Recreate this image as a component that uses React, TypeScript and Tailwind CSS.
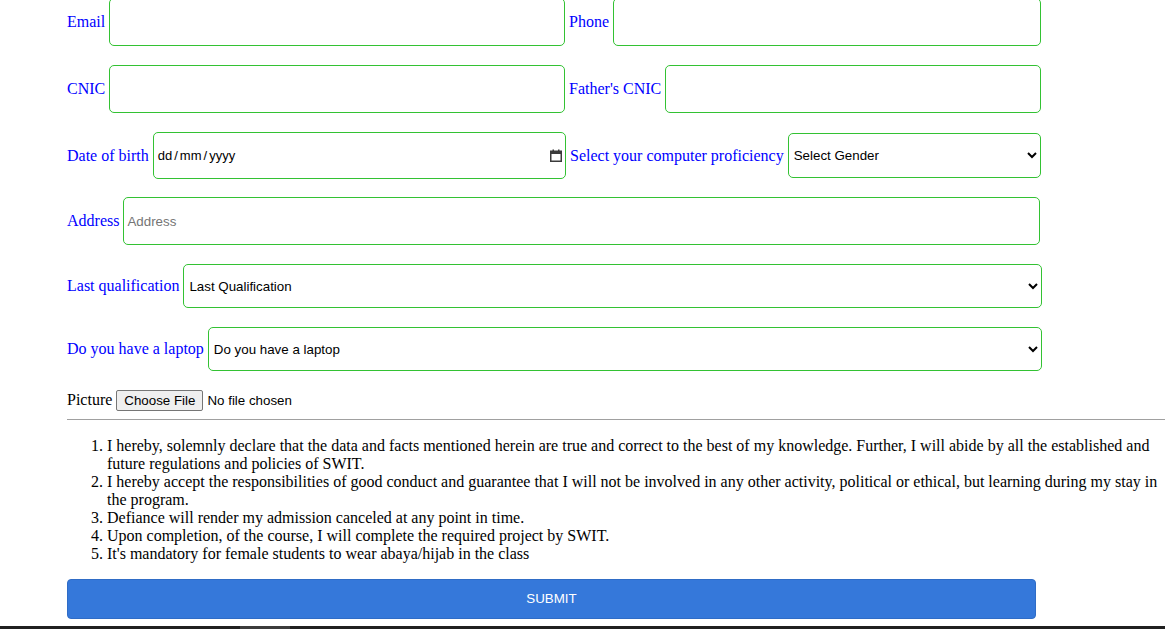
import React from 'react'

const label = "text-[16px] text-[#0000ff] whitespace-nowrap font-['Liberation_Serif',serif]"
const field =
  "border border-[#33c233] rounded-[5px] bg-white px-[3px] text-[13.33px] text-black font-['Liberation_Sans',Arial,sans-serif] outline-none"
const select =
  "border border-[#33c233] rounded-[5px] bg-white pl-[1px] pr-[3px] text-[13.33px] text-black font-['Liberation_Sans',Arial,sans-serif] outline-none"

const terms = [
  'I hereby, solemnly declare that the data and facts mentioned herein are true and correct to the best of my knowledge. Further, I will abide by all the established and future regulations and policies of SWIT.',
  'I hereby accept the responsibilities of good conduct and guarantee that I will not be involved in any other activity, political or ethical, but learning during my stay in the program.',
  'Defiance will render my admission canceled at any point in time.',
  'Upon completion, of the course, I will complete the required project by SWIT.',
  "It's mandatory for female students to wear abaya/hijab in the class",
]

function Field({ name, className }: { name: string; className: string }) {
  return (
    <div className={`flex items-center gap-1 ${className}`}>
      <label className={label}>{name}</label>
      <input type="text" className={`${field} flex-1 min-w-0 h-full`} />
    </div>
  )
}

function CalendarIcon() {
  return (
    <svg width="12" height="13" viewBox="0 0 12 13" className="shrink-0">
      <rect x="0.75" y="2.25" width="10.5" height="10" fill="none" stroke="#3b3b3b" strokeWidth="1.5" />
      <rect x="0" y="2" width="12" height="3" fill="#3b3b3b" />
      <rect x="2.5" y="0.5" width="1.5" height="2" fill="#3b3b3b" />
      <rect x="8" y="0.5" width="1.5" height="2" fill="#3b3b3b" />
    </svg>
  )
}

function App() {
  return (
    <div className="min-h-screen bg-white overflow-hidden">
      <form className="pl-[67px] flex flex-col" onSubmit={(e) => e.preventDefault()}>
        <div className="flex gap-1 mt-[-2px] h-[48px]">
          <Field name="Email" className="w-[498px]" />
          <Field name="Phone" className="w-[472px]" />
        </div>

        <div className="flex gap-1 mt-[19px] h-[48px]">
          <Field name="CNIC" className="w-[498px]" />
          <Field name="Father's CNIC" className="w-[472px]" />
        </div>

        <div className="flex gap-1 mt-[19px] h-[47px] items-center">
          <div className="flex items-center gap-1 w-[499px] h-full">
            <label className={label}>Date of birth</label>
            <div className={`${field} flex-1 min-w-0 h-full flex items-center justify-between pr-[3px] text-[13px]`}>
              <span className="pl-[1px]">
                dd<span className="mx-[2px]">/</span>mm<span className="mx-[2px]">/</span>yyyy
              </span>
              <CalendarIcon />
            </div>
          </div>
          <div className="flex items-center gap-1 w-[471px] h-[45px]">
            <label className={label}>Select your computer proficiency</label>
            <select className={`${select} flex-1 min-w-0 h-full`}>
              <option>Select Gender</option>
              <option>Beginner</option>
              <option>Intermediate</option>
              <option>Advanced</option>
            </select>
          </div>
        </div>

        <div className="flex items-center gap-1 mt-[18px] h-[48px] w-[973px]">
          <label className={label}>Address</label>
          <input type="text" placeholder="Address" className={`${field} flex-1 min-w-0 h-full placeholder:text-[#757575]`} />
        </div>

        <div className="flex items-center gap-1 mt-[19px] h-[44px] w-[975px]">
          <label className={label}>Last qualification</label>
          <select className={`${select} flex-1 min-w-0 h-full`}>
            <option>Last Qualification</option>
            <option>Matric</option>
            <option>Intermediate</option>
            <option>Graduation</option>
          </select>
        </div>

        <div className="flex items-center gap-1 mt-[19px] h-[44px] w-[975px]">
          <label className={label}>Do you have a laptop</label>
          <select className={`${select} flex-1 min-w-0 h-full`}>
            <option>Do you have a laptop</option>
            <option>Yes</option>
            <option>No</option>
          </select>
        </div>

        <div className="flex items-center gap-1 mt-[18px] h-[22px]">
          <label className="text-[16px] text-black font-['Liberation_Serif',serif]">Picture</label>
          <input
            type="file"
            className="text-[13.33px] text-black font-['Liberation_Sans',Arial,sans-serif] file:mr-[4px] file:h-[21px] file:px-[7px] file:bg-[#efefef] file:border file:border-[#767676] file:rounded-[2px] file:text-black"
          />
        </div>

        <hr className="mt-[8px] border-0 border-t border-[#a0a0a0]" />

        <ol className="mt-[17px] pl-[40px] list-decimal text-[16px] leading-[18px] text-black font-['Liberation_Serif',serif]">
          {terms.map((t) => (
            <li key={t}>{t}</li>
          ))}
        </ol>

        <button
          type="submit"
          className="mt-[16px] w-[969px] h-[40px] rounded-[4px] bg-[#3578da] border border-[#2f6cc6] text-white text-[13.33px] font-['Liberation_Sans',Arial,sans-serif]"
        >
          SUBMIT
        </button>
      </form>
      <div className="mt-[7px] h-[3px] bg-[#202020] flex">
        <div className="ml-[240px] w-[50px] bg-[#3c3c3c]" />
      </div>
    </div>
  )
}

export default App
